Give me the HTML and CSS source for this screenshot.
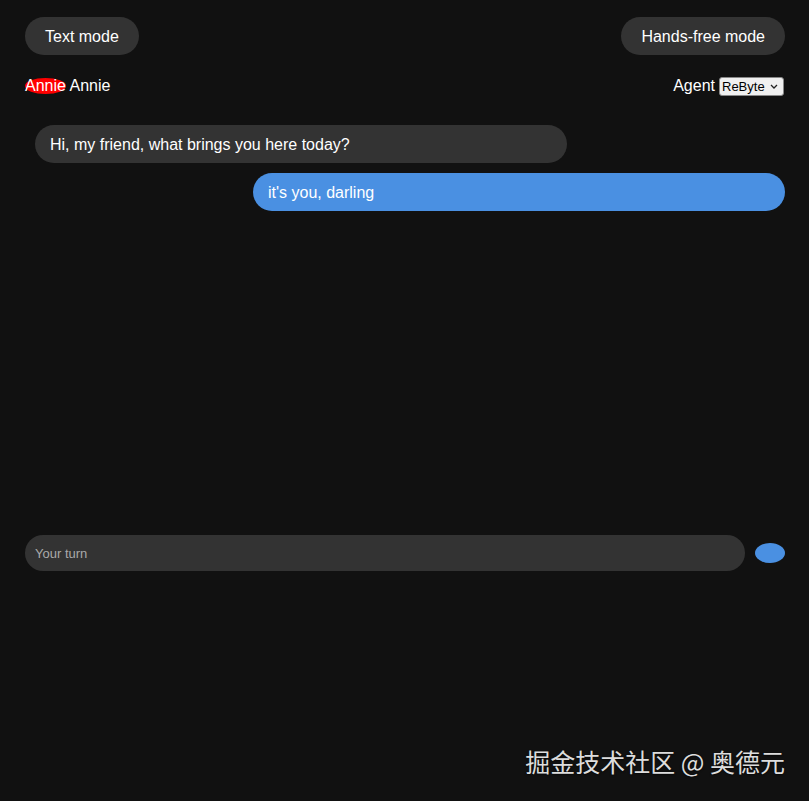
FILE: index.html
```html
<!DOCTYPE html>
<html lang="en">
<head>
    <meta charset="UTF-8">
    <meta name="viewport" content="width=device-width, initial-scale=1.0">
    <title>Annie</title>
    <link rel="stylesheet" href="styles.css">
</head>
<body>
    <div class="app">
        <div class="mode-bar">
            <button class="mode-btn">Text mode</button>
            <button class="mode-btn">Hands-free mode</button>
        </div>

        <div class="info-bar">
            <div class="character"><span class="speaking">Annie</span> Annie</div>
            <div class="agent">
                <label for="agent">Agent</label>
                <select id="agent" class="agent-select">
                    <option>ReByte</option>
                </select>
            </div>
        </div>

        <div class="chat">
            <div class="bubble bubble-bot">Hi, my friend, what brings you here today?</div>
            <div class="bubble bubble-user">it's you, darling</div>
        </div>

        <div class="input-row">
            <input type="text" class="chat-input" placeholder="Your turn">
            <button class="send-btn"></button>
        </div>
    </div>

    <div class="watermark">掘金技术社区 @ 奥德元</div>
</body>
</html>
```

FILE: styles.css
```css
body {
    margin: 0;
    background-color: #111;
    color: #fff;
    font-family: "Liberation Sans", Arial, sans-serif;
    height: 801px;
    position: relative;
}

.app {
    width: 760px;
    padding: 17px 0 0 25px;
}

.mode-bar {
    display: flex;
    justify-content: space-between;
}

.mode-btn {
    box-sizing: border-box;
    height: 38px;
    padding: 2px 20px 0;
    border: none;
    border-radius: 19px;
    background-color: #333;
    color: #fff;
    font-family: "Liberation Sans", Arial, sans-serif;
    font-size: 16px;
}

.info-bar {
    display: flex;
    justify-content: space-between;
    align-items: center;
    height: 20px;
    margin-top: 21px;
    font-size: 16px;
}

.speaking {
    display: inline-block;
    line-height: 15px;
    padding-bottom: 1px;
    background-color: #f00;
    border-radius: 50%;
}

.agent {
    display: flex;
    align-items: center;
    gap: 4px;
    margin-right: 1px;
}

.agent-select {
    appearance: none;
    font-family: "Liberation Sans", Arial, sans-serif;
    font-size: 13px;
    width: 65px;
    height: 19px;
    padding: 0 0 0 2px;
    border: 1px solid #888;
    border-radius: 3px;
    background-color: #f0f0f0;
    background-image: url("data:image/svg+xml,%3Csvg xmlns='http://www.w3.org/2000/svg' width='8' height='5' viewBox='0 0 8 5'%3E%3Cpath d='M1 1l3 3 3-3' fill='none' stroke='%23222' stroke-width='1.3'/%3E%3C/svg%3E");
    background-repeat: no-repeat;
    background-position: right 5px center;
    color: #000;
}

.chat {
    height: 400px;
    margin-top: 29px;
    display: flex;
    flex-direction: column;
    gap: 10px;
}

.bubble {
    box-sizing: border-box;
    width: 532px;
    height: 38px;
    line-height: 38px;
    padding: 1px 15px 0;
    border-radius: 19px;
    font-size: 16px;
}

.bubble-bot {
    background-color: #333;
    margin-left: 10px;
}

.bubble-user {
    background-color: #4a90e2;
    align-self: flex-end;
}

.input-row {
    display: flex;
    align-items: center;
    gap: 10px;
    margin-top: 10px;
}

.chat-input {
    flex: 1;
    box-sizing: border-box;
    height: 36px;
    padding: 0 10px;
    border: none;
    border-radius: 18px;
    background-color: #333;
    color: #fff;
    font-family: "Liberation Sans", Arial, sans-serif;
    font-size: 13px;
    outline: none;
}

.chat-input::placeholder {
    color: #aaa;
}

.send-btn {
    width: 30px;
    height: 20px;
    padding: 0;
    border: none;
    border-radius: 50%;
    background-color: #4a90e2;
}

.watermark {
    position: absolute;
    right: 24px;
    bottom: 22px;
    font-family: "Noto Sans CJK SC", "Noto Sans", sans-serif;
    font-size: 25px;
    color: #ddd;
    text-shadow: 0 1px 2px rgba(0, 0, 0, 0.6);
}
```
